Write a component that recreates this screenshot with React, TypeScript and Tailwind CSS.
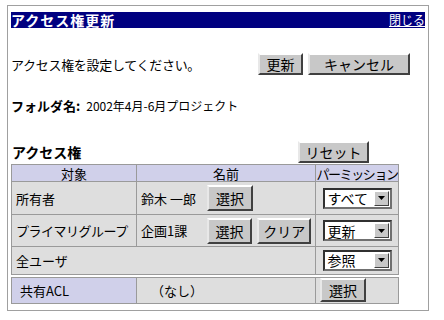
import { ReactNode } from "react";

const font = "font-['Noto_Sans_CJK_JP','Noto_Sans_CJK_SC',sans-serif]";

function Btn({ children, className = "" }: { children: ReactNode; className?: string }) {
  return (
    <button
      type="button"
      className={`flex items-center justify-center border-2 border-t-white border-l-[#e8e8e8] border-r-[#404040] border-b-[#404040] bg-[#c8c8c8] text-[14px] leading-none text-black ${className}`}
    >
      {children}
    </button>
  );
}

function Select({ value }: { value: string }) {
  return (
    <div className="flex h-[21px] w-[69px] items-center border-2 border-t-[#303030] border-l-[#303030] border-r-[#707070] border-b-[#707070] bg-white">
      <span className="flex-1 pl-[3px] text-[14px] leading-none">{value}</span>
      <span className="mr-[1px] flex h-[15px] w-[15px] items-center justify-center border border-t-white border-l-white border-r-[#404040] border-b-[#404040] bg-[#c8c8c8]">
        <svg width="7" height="4" viewBox="0 0 7 4">
          <path d="M0 0h7L3.5 4z" fill="#000" />
        </svg>
      </span>
    </div>
  );
}

const td = "border border-[#9a9a9a] px-[4px] text-[13px] leading-none whitespace-nowrap overflow-hidden";
const gray = `${td} bg-[#dedede]`;
const lav = `${td} bg-[#d0d0ea]`;
const head = "border border-[#9a9a9a] bg-[#d0d0ea] text-center text-[13px] font-normal leading-none h-[17px] whitespace-nowrap overflow-hidden";

export default function App() {
  return (
    <div className={`h-[320px] w-[444px] bg-white pl-[7px] pt-[5px] ${font} text-black`}>
      <div className="flex h-[306px] w-[422px] flex-col border border-[#a0a0a0] px-[3px] pt-[6px]">
        <div className="flex h-[16px] items-center justify-between bg-[#000080] text-white">
          <span className="text-[14px] font-bold leading-none tracking-[1px]">アクセス権更新</span>
          <a className="text-[12px] leading-none underline">閉じる</a>
        </div>

        <div className="mt-[25px] flex h-[22px] items-center">
          <span className="w-[247px] text-[13px] leading-none tracking-[-0.3px]">アクセス権を設定してください。</span>
          <Btn className="h-[22px] w-[45px]">更新</Btn>
          <Btn className="ml-[5px] h-[22px] w-[102px]">キャンセル</Btn>
        </div>

        <div className="mt-[24px] flex items-center">
          <span className="text-[13px] font-bold leading-none">フォルダ名:</span>
          <span className="ml-[6px] text-[12px] leading-none">2002年4月-6月プロジェクト</span>
        </div>

        <div className="mt-[29px] flex h-[22px] items-end">
          <span className="mb-[4px] w-[287px] pl-[1px] text-[14px] font-bold leading-none">アクセス権</span>
          <Btn className="h-[22px] w-[71px]">リセット</Btn>
        </div>

        <table className="mt-[1px] w-[387px] table-fixed border-collapse border border-[#8a8a8a]">
          <colgroup>
            <col className="w-[125px]" />
            <col className="w-[179px]" />
            <col className="w-[83px]" />
          </colgroup>
          <thead>
            <tr>
              <th className={head}>対象</th>
              <th className={head}>名前</th>
              <th className={`${head} px-0 text-[12px] tracking-[-1.4px]`}>パーミッション</th>
            </tr>
          </thead>
          <tbody>
            <tr className="h-[33px]">
              <td className={gray}>所有者</td>
              <td className={gray}>
                <div className="flex items-center">
                  <span className="w-[66px]">鈴木 一郎</span>
                  <Btn className="h-[26px] w-[46px]">選択</Btn>
                </div>
              </td>
              <td className={gray}>
                <div className="flex justify-center">
                  <Select value="すべて" />
                </div>
              </td>
            </tr>
            <tr className="h-[32px]">
              <td className={`${gray} tracking-[-0.5px]`}>プライマリグループ</td>
              <td className={gray}>
                <div className="flex items-center">
                  <span className="w-[66px]">企画1課</span>
                  <Btn className="h-[26px] w-[46px]">選択</Btn>
                  <Btn className="ml-[5px] h-[26px] w-[54px]">クリア</Btn>
                </div>
              </td>
              <td className={gray}>
                <div className="flex justify-center">
                  <Select value="更新" />
                </div>
              </td>
            </tr>
            <tr className="h-[29px]">
              <td className={gray} colSpan={2}>全ユーザ</td>
              <td className={gray}>
                <div className="flex justify-center">
                  <Select value="参照" />
                </div>
              </td>
            </tr>
            <tr className="h-[28px]">
              <td className={`${lav} border-t-[4px] border-double pl-[8px]`}>共有ACL</td>
              <td className={`${gray} border-t-[4px] border-double pl-[14px]`}>（なし）</td>
              <td className={`${gray} border-t-[4px] border-double px-[1px]`}>
                <Btn className="h-[24px] w-[46px]">選択</Btn>
              </td>
            </tr>
          </tbody>
        </table>
      </div>
    </div>
  );
}
